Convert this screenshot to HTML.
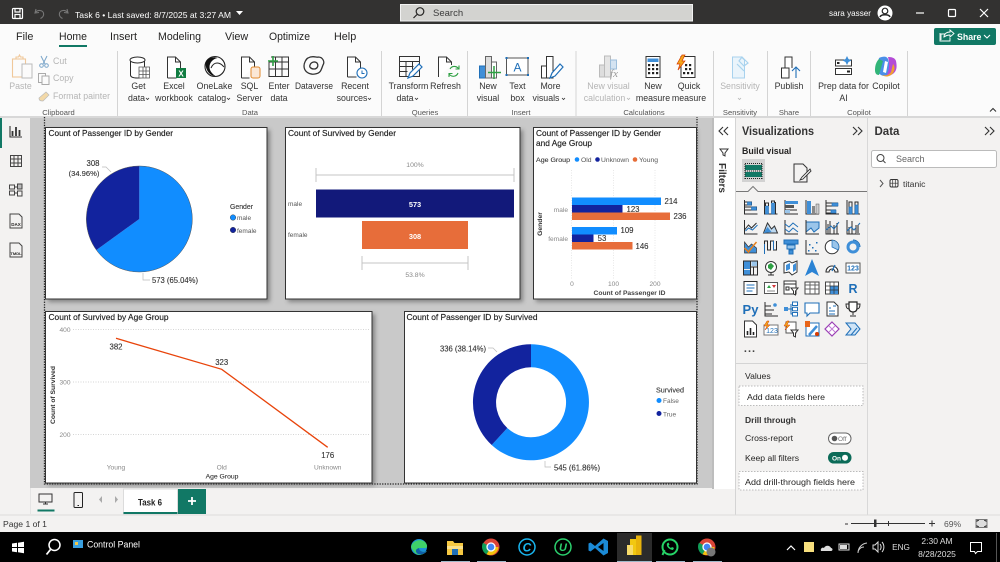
<!DOCTYPE html>
<html><head><meta charset="utf-8"><title>Task 6</title>
<style>
html,body{margin:0;padding:0;background:#fff;width:1000px;height:562px;overflow:hidden}
svg{display:block}
text{font-family:"Liberation Sans",sans-serif;fill:#252423;font-size:9px}
.r{text-anchor:middle;font-size:8.8px;fill:#333}
.g{text-anchor:middle;font-size:8.8px;fill:#b5b5b5}
.c{text-anchor:middle;font-size:7.6px;fill:#555}
.tb{font-size:10.8px;fill:#252423}
.t{font-size:8.6px;fill:#1c1c1c;stroke:#1c1c1c;stroke-width:.15px}
.d{font-size:7.8px;fill:#333;text-anchor:middle;stroke:#333;stroke-width:.12px}
.ax{font-size:6.6px;fill:#888;text-anchor:middle}
.w{fill:#fff}
.k{fill:none;stroke:#2b2b2b;stroke-width:1}
.b{fill:#3f8fd8;stroke:#1f6fb8;stroke-width:.6}
.bl{fill:none;stroke:#1f6fb8;stroke-width:1}
.v{font-size:8.6px;fill:#252423}
</style></head><body>
<svg width="1000" height="562" viewBox="0 0 1000 562" xmlns="http://www.w3.org/2000/svg">
<defs><filter id="s" x="-10%" y="-10%" width="125%" height="125%"><feGaussianBlur stdDeviation="2.2"/></filter></defs>

<!-- base -->
<rect width="1000" height="562" fill="#f3f2f1"/>
<rect x="0" y="0" width="1000" height="24" fill="#333231"/>
<rect x="0" y="24" width="1000" height="93" fill="#fbfbfb"/>
<rect x="0" y="116" width="1000" height="2" fill="#d8d8d8"/>
<rect x="30" y="118" width="682" height="370" fill="#c9c9c9"/>
<rect x="712" y="118" width="24" height="371" fill="#fff"/>
<rect x="712" y="118" width="2" height="371" fill="#bdbdbd"/>
<rect x="735" y="118" width="1" height="397" fill="#d4d4d4"/>
<rect x="867" y="118" width="1" height="397" fill="#d8d8d8"/>
<rect x="0" y="514.500" width="1000" height="1" fill="#dcdcdc"/>
<rect x="0" y="532" width="1000" height="30" fill="#000"/>

<!-- title bar -->
<g fill="none" stroke="#fff" stroke-width="1.200"><rect x="12.500" y="8.500" width="10" height="10" rx="1"/><path d="M15 8.500v3.500h5V8.500M15 18.500v-4h5v4"/></g>
<g fill="none" stroke="#777" stroke-width="1.100"><path d="M36 9l-1 4 4-.5M35.500 12.500c2-3 7-2.500 8 .5 .7 2.500-1 4.500-3 5.500"/><path d="M67 9l1 4-4-.5M67.500 12.500c-2-3-7-2.500-8 .5-.7 2.500 1 4.500 3 5.500"/></g>
<text x="75" y="18" style="fill:#fff;font-size:8.600px" textLength="156" lengthAdjust="spacingAndGlyphs">Task 6 • Last saved: 8/7/2025 at 3:27 AM</text>
<path d="M236 11h7l-3.500 4z" fill="#fff"/>
<rect x="400.500" y="4.500" width="292" height="16.500" fill="#d3d3d0" stroke="#f2f2f2"/>
<g fill="none" stroke="#252423" stroke-width="1.200"><circle cx="420" cy="11.500" r="3.800"/><path d="M417 14.500l-3.500 3.500"/></g>
<text x="433" y="16" style="font-size:9.500px;fill:#3b3b3b">Search</text>
<text x="829" y="16" style="font-size:8.500px;fill:#fff" textLength="42" lengthAdjust="spacingAndGlyphs">sara yasser</text>
<circle cx="885" cy="13" r="7.500" fill="#fff"/><circle cx="885" cy="11" r="2.800" fill="none" stroke="#222" stroke-width="1.200"/><path d="M880 17c1-3 9-3 10 0" fill="none" stroke="#222" stroke-width="1.500"/>
<path d="M916 13h8" stroke="#fff" stroke-width="1.200"/><rect x="948.500" y="9.500" width="7" height="7" rx="1" fill="none" stroke="#fff" stroke-width="1.200"/><path d="M980 9l8 8M988 9l-8 8" stroke="#fff" stroke-width="1.200"/>

<!-- tabs -->
<text x="16" y="40" class="tb">File</text>
<text x="59" y="40" class="tb" textLength="28" lengthAdjust="spacingAndGlyphs">Home</text>
<rect x="59" y="45" width="28" height="2" fill="#117865"/>
<text x="110" y="40" class="tb">Insert</text>
<text x="158" y="40" class="tb" textLength="43" lengthAdjust="spacingAndGlyphs">Modeling</text>
<text x="225" y="40" class="tb">View</text>
<text x="269" y="40" class="tb" textLength="41" lengthAdjust="spacingAndGlyphs">Optimize</text>
<text x="334" y="40" class="tb">Help</text>
<rect x="934" y="28" width="62" height="17" rx="2" fill="#117865"/>
<path d="M941 40v-6h4M944 36c1-3 3-4 6-4v-2l4 3.500-4 3.500v-2c-2 0-4 .5-6 2z M940 33v8h10v-3" fill="none" stroke="#fff" stroke-width=".9"/>
<text x="957" y="40" style="font-size:8.800px;fill:#fff;font-weight:bold">Share</text>
<path d="M984 35l3 3 3-3" fill="none" stroke="#fff" stroke-width="1.100"/>

<!-- ribbon separators -->
<g fill="#d4d4d4"><rect x="117" y="51" width="1" height="65"/><rect x="381" y="51" width="1" height="65"/><rect x="467" y="51" width="1" height="65"/><rect x="575.500" y="51" width="1" height="65"/><rect x="713" y="51" width="1" height="65"/><rect x="767" y="51" width="1" height="65"/><rect x="810" y="51" width="1" height="65"/><rect x="907" y="51" width="1" height="65"/></g>

<!-- clipboard -->
<g fill="none" stroke="#f0c89a" stroke-width="1.100"><rect x="12.500" y="59" width="13" height="18"/><path d="M16 59v-2h2.500l1-2 1 2H23v2"/></g><rect x="22" y="64" width="10" height="14" fill="#fbfbfb" stroke="#bbb"/>
<text x="20.500" y="89" class="g">Paste</text>
<path d="M41 56l4 8M47 56l-4 8" stroke="#7aa5c9" fill="none"/><circle cx="41.500" cy="65.500" r="1.800" fill="none" stroke="#7aa5c9"/><circle cx="46.500" cy="65.500" r="1.800" fill="none" stroke="#7aa5c9"/>
<text x="53" y="64" style="fill:#b5b5b5;font-size:8.800px">Cut</text>
<g fill="none" stroke="#aaa"><rect x="38.500" y="73.500" width="7" height="9"/><path d="M42 76h7v8.500h-7z" fill="#fbfbfb"/></g>
<text x="53" y="81" style="fill:#b5b5b5;font-size:8.800px">Copy</text>
<path d="M39 98l7-6 3 3-6 6c-2 0-4 0-4-3z" fill="#f3d9a8" stroke="#bbb" stroke-width=".7"/>
<text x="53" y="99" style="fill:#b5b5b5;font-size:8.800px" textLength="57" lengthAdjust="spacingAndGlyphs">Format painter</text>
<text x="58.500" y="115" class="c">Clipboard</text>

<!-- data -->
<g fill="#fff" stroke="#2b2b2b"><path d="M130.500 60v15c0 2 3 3 7 3s7-1 7-3V60"/><ellipse cx="137.500" cy="60" rx="7.500" ry="3"/><path d="M139 67h10.500v11H139zM139 71h10.500M139 74.500h10.500M143 67v11M146 67v11" stroke="#555" stroke-width=".8"/></g>
<text x="138.500" y="89" class="r">Get</text><text x="136.500" y="101" class="r">data</text><path d="M146 98l1.500 1.500L149 98" fill="none" stroke="#333" stroke-width=".8"/>
<path d="M167.500 78V57h8l5 5v6M175.500 57v5h5M167.500 78h9" fill="#fff" stroke="#333"/><rect x="176" y="68" width="10" height="10" fill="#107c41"/><text x="181" y="76.500" style="font-size:8px;fill:#fff;text-anchor:middle;font-weight:bold">X</text>
<text x="174" y="89" class="r">Excel</text><text x="174" y="101" class="r">workbook</text>
<circle cx="215" cy="66.500" r="10" fill="#fff" stroke="#222" stroke-width="1.100"/><path d="M205.500 63c1-5 8-7 12-5-5 1-8 5-8 9 0 4 3 7 6 9-5 0-10-5-10-13z" fill="#111"/><path d="M211 68c3-7 9-6 13-1" fill="none" stroke="#222"/>
<text x="214.500" y="89" class="r">OneLake</text><text x="212" y="101" class="r">catalog</text><path d="M227 98l1.500 1.500L230 98" fill="none" stroke="#333" stroke-width=".8"/>
<path d="M241.500 78V57h8l5 5v5M249.500 57v5h5M241.500 78h8" fill="#fff" stroke="#333"/><rect x="251" y="67" width="9" height="11" rx="2" fill="#fbe7d5" stroke="#e08a2e"/>
<text x="249.500" y="89" class="r">SQL</text><text x="249.500" y="101" class="r">Server</text>
<path d="M271 57h17.500v19.500H269V62M269 62h19.500M269 69h19.500M275.500 57v19.500M282 57v19.500" fill="none" stroke="#333"/><path d="M273 56v10M268 61h10" stroke="#2ea043" stroke-width="1.600"/>
<text x="279" y="89" class="r">Enter</text><text x="279" y="101" class="r">data</text>
<g fill="none" stroke="#333" stroke-width="1.300"><path d="M308 58c5-3 9 0 10-1 5 0 7 5 5 8-2 5-2 8-8 9-5 1-11-2-11-8 0-3 2-7 4-8z"/><path d="M310 65c1-3 5-4 7-2 2 3 0 6-3 6s-5-2-4-4z"/></g>
<text x="314" y="89" class="r" textLength="38" lengthAdjust="spacingAndGlyphs">Dataverse</text>
<path d="M347.500 77V57h8l5 5v6M355.500 57v5h5M347.500 77h9" fill="#fff" stroke="#333"/><circle cx="362" cy="73" r="5" fill="#fff" stroke="#1f6fb8" stroke-width="1.100"/><path d="M362 70.500V73.500h2.500" fill="none" stroke="#1f6fb8"/>
<text x="355" y="89" class="r">Recent</text><text x="352" y="101" class="r">sources</text><path d="M368 98l1.500 1.500L371 98" fill="none" stroke="#333" stroke-width=".8"/>
<text x="250" y="115" class="c">Data</text>

<!-- queries -->
<path d="M399.500 56.500h20v20h-20zM399.500 61.500h20M406 61.500v15M412.500 61.500v8M399.500 66.500h14M399.500 71.500h8" fill="none" stroke="#333"/><path d="M408 78l2-5 9-9 3 3-9 9z" fill="#fff" stroke="#1f6fb8" stroke-width="1.200"/>
<text x="408.500" y="89" class="r">Transform</text><text x="405" y="101" class="r">data</text><path d="M415 98l1.500 1.500L418 98" fill="none" stroke="#333" stroke-width=".8"/>
<path d="M438.500 77V57h8l5 5v3M446.500 57v5h5" fill="#fff" stroke="#333"/><path d="M450 69a5 5 0 0 1 8-1l1 1M458 73a5 5 0 0 1-8 2l-1-1M459 65.500v3.500h-3.500M449 77v-3.500h3.500" fill="none" stroke="#2ea043" stroke-width="1.100"/>
<text x="445.500" y="89" class="r">Refresh</text>
<text x="425" y="115" class="c">Queries</text>

<!-- insert -->
<rect x="479.500" y="66" width="6" height="12" fill="#3f8fd8" stroke="#1f6fb8"/><rect x="485.500" y="56.500" width="6" height="21.500" fill="#ddd" stroke="#666"/><rect x="491.500" y="62" width="5" height="16" fill="#fff" stroke="#666"/><path d="M494 66v13M488 72.500h13" stroke="#2ea043" stroke-width="1.500"/>
<text x="488" y="89" class="r">New</text><text x="488" y="101" class="r">visual</text>
<rect x="506.500" y="58" width="21.500" height="17" fill="#fff" stroke="#555"/><g fill="#1f6fb8"><rect x="505.500" y="57" width="2" height="2"/><rect x="527" y="57" width="2" height="2"/><rect x="505.500" y="74" width="2" height="2"/><rect x="527" y="74" width="2" height="2"/></g><text x="517.500" y="71.500" style="font-size:12px;fill:#1f6fb8;text-anchor:middle">A</text>
<text x="517.500" y="89" class="r">Text</text><text x="517.500" y="101" class="r">box</text>
<path d="M541.500 78V66h5v12zM546.500 78V56.500h6.500V78zM553 78h-11.500" fill="#fff" stroke="#333"/><path d="M550 78l2-5 8-9 3 3-8 9z" fill="#fff" stroke="#1f6fb8" stroke-width="1.200"/>
<text x="550.500" y="89" class="r">More</text><text x="546" y="101" class="r">visuals</text><path d="M562 98l1.500 1.500L565 98" fill="none" stroke="#333" stroke-width=".8"/>
<text x="521" y="115" class="c">Insert</text>

<!-- calculations -->
<rect x="599.500" y="65" width="5" height="12" fill="#ddd" stroke="#bbb"/><rect x="604.500" y="56" width="6" height="21" fill="#e5e5e5" stroke="#bbb"/><rect x="610.500" y="60" width="6" height="9" fill="#d4e3f1" stroke="#9dbedb"/><text x="614" y="77" style="font-family:'Liberation Serif',serif;font-style:italic;font-size:11px;fill:#999;text-anchor:middle">fx</text>
<text x="608.500" y="89" class="g">New visual</text><text x="604.500" y="101" class="g">calculation</text><path d="M627 98l1.500 1.500L630 98" fill="none" stroke="#b5b5b5" stroke-width=".8"/>
<rect x="646" y="56.500" width="14" height="21" fill="#fff" stroke="#333"/><rect x="647.500" y="58.500" width="11" height="3.500" fill="#3f8fd8"/><g fill="#222"><rect x="648" y="64" width="2.200" height="2.200"/><rect x="652" y="64" width="2.200" height="2.200"/><rect x="656" y="64" width="2.200" height="2.200"/><rect x="648" y="68" width="2.200" height="2.200"/><rect x="652" y="68" width="2.200" height="2.200"/><rect x="656" y="68" width="2.200" height="2.200"/><rect x="648" y="72" width="2.200" height="2.200"/><rect x="652" y="72" width="2.200" height="2.200"/><rect x="656" y="72" width="2.200" height="2.200"/></g>
<text x="653" y="89" class="r">New</text><text x="653" y="101" class="r">measure</text>
<rect x="681" y="56.500" width="14" height="21" fill="#fff" stroke="#333"/><g fill="#222"><rect x="685" y="64" width="2.200" height="2.200"/><rect x="689" y="64" width="2.200" height="2.200"/><rect x="685" y="68" width="2.200" height="2.200"/><rect x="689" y="68" width="2.200" height="2.200"/><rect x="683" y="72" width="2.200" height="2.200"/><rect x="687" y="72" width="2.200" height="2.200"/><rect x="691" y="72" width="2.200" height="2.200"/></g><path d="M682 55l-5 9h3l-2 6 7-9h-3l3-6z" fill="#f2a81d" stroke="#d83b01" stroke-width=".7"/>
<text x="689" y="89" class="r">Quick</text><text x="689" y="101" class="r">measure</text>
<text x="644" y="115" class="c">Calculations</text>

<!-- sensitivity -->
<path d="M732.500 57h9l3 3v18h-12z" fill="#eaf4fb" stroke="#a8d2ee"/><path d="M737 64l7 7M742 57l6 6-4 3-5-5z" fill="none" stroke="#a8d2ee" stroke-width="1.200"/>
<text x="740" y="89" class="g">Sensitivity</text><path d="M738 98l1.500 1.500L741 98" fill="none" stroke="#b5b5b5" stroke-width=".8"/>
<text x="740" y="115" class="c">Sensitivity</text>
<!-- publish -->
<path d="M781.500 78V68h7.500v10zM785 68v-11h7v11M781.500 78h7.500" fill="#fff" stroke="#333"/><path d="M796 78V67M792 71l4-4 4 4" fill="none" stroke="#1f6fb8" stroke-width="1.100"/>
<text x="789" y="89" class="r">Publish</text><text x="789" y="115" class="c">Share</text>
<!-- copilot -->
<rect x="835.500" y="60" width="16" height="6" fill="#fff" stroke="#333"/><rect x="835.500" y="68.500" width="16" height="6" fill="#fff" stroke="#333"/><rect x="837" y="62" width="2.500" height="2" fill="#222"/><rect x="847" y="70.500" width="3" height="2" fill="#222"/>
<path d="M847 56l1.500 3 3 1.500-3 1.500-1.500 3-1.500-3-3-1.500 3-1.500z" fill="#3f8fd8"/>
<text x="843.500" y="89" class="r">Prep data for</text><text x="843.500" y="101" class="r">AI</text>
<path d="M879 58c4-2 8-2 9 1l3 12c-2 5-7 6-10 4l-3-2c0-4 0-11 1-15z" fill="#4b8fe8"/><path d="M888 57c4 0 7 1 8 4 1 5 1 9-2 12-2 2-5 3-8 3 3-4 4-12 2-19z" fill="#b44bd6"/><path d="M875 70c0-4 1-8 4-11l4 2-4 14c-3 0-4-2-4-5z" fill="#32b578"/><path d="M882 75c4 1 7 0 9-3l2-8c2 2 2 6 0 9-2 3-7 5-11 2z" fill="#f0a030"/><path d="M885 61l3 1-2 11-3-1z" fill="#fff"/>
<text x="886" y="89" class="r">Copilot</text><text x="859" y="115" class="c">Copilot</text>
<path d="M990 111.500l3-3 3 3" fill="none" stroke="#333" stroke-width="1.100"/>

<!-- left nav -->
<rect x="0" y="118" width="2" height="30" fill="#117865"/>
<g fill="none" stroke="#333" stroke-width="1.100"><path d="M10 126v11h12" /><path d="M12.500 136v-5M16 136v-9M19.500 136v-6" stroke-width="1.800"/></g>
<g fill="none" stroke="#444"><rect x="10.500" y="155.500" width="11" height="11"/><path d="M10.500 159h11M10.500 163h11M14 155.500v11M18 155.500v11"/></g>
<g fill="none" stroke="#444"><rect x="9.500" y="185" width="5" height="4"/><rect x="9.500" y="191" width="5" height="4"/><path d="M14.500 187h3M14.500 193h3"/><rect x="17.500" y="184" width="4.500" height="5" fill="#bbb"/><rect x="17.500" y="191" width="4.500" height="5"/></g>
<path d="M10 214h9l3 3v11H10z" fill="none" stroke="#444"/><text x="16" y="226" style="font-size:4.500px;text-anchor:middle;font-weight:bold">DAX</text>
<path d="M10 243h9l3 3v11H10z" fill="none" stroke="#444"/><text x="16" y="255" style="font-size:4px;text-anchor:middle;font-weight:bold">TMDL</text>

<!-- canvas frame -->
<path d="M44.500 117V484H697V117" fill="none" stroke="#222" stroke-width="1.300" stroke-dasharray="1.300 1.300"/>

<!-- shadows -->
<g fill="#555" opacity=".6" filter="url(#s)"><rect x="48" y="130" width="222" height="172"/><rect x="288" y="130" width="235" height="172"/><rect x="536" y="130" width="161" height="172"/><rect x="48" y="314" width="327" height="171"/></g>

<!-- visual 1 -->
<rect x="45.500" y="127.500" width="221.500" height="171.500" fill="#fff" stroke="#333"/>
<text x="48.500" y="136" class="t" textLength="124.500" lengthAdjust="spacingAndGlyphs">Count of Passenger ID by Gender</text>
<path d="M139.300 166A53 53 0 1 1 96.400 250L139.300 219Z" fill="#118dff"/>
<path d="M139.300 166A53 53 0 0 0 96.400 250L139.300 219Z" fill="#12239e"/>
<circle cx="139.300" cy="219" r="53" fill="none" stroke="#555" stroke-width=".5"/>
<text x="93" y="166" class="d">308</text><text x="84" y="176" class="d" style="font-size:7.600px">(34.96%)</text>
<text x="152" y="283" style="font-size:7.800px;fill:#333;stroke:#333;stroke-width:.12px" textLength="46" lengthAdjust="spacingAndGlyphs">573 (65.04%)</text>
<path d="M102 167h4l5 5M143 273v7h7" fill="none" stroke="#bbb" stroke-width=".7"/>
<text x="230" y="209" style="font-size:7px;fill:#333;stroke:#333;stroke-width:.12px" textLength="23" lengthAdjust="spacingAndGlyphs">Gender</text>
<circle cx="233" cy="217.500" r="2.800" fill="#118dff" stroke="#333" stroke-width=".4"/><text x="237" y="220" style="font-size:6.500px;fill:#555">male</text>
<circle cx="233" cy="230" r="2.800" fill="#12239e" stroke="#333" stroke-width=".4"/><text x="237" y="233" style="font-size:6.500px;fill:#555">female</text>

<!-- visual 2 -->
<rect x="285.500" y="127.500" width="234.500" height="171.500" fill="#fff" stroke="#333"/>
<text x="288" y="136" class="t" textLength="108" lengthAdjust="spacingAndGlyphs">Count of Survived by Gender</text>
<text x="415" y="167" class="ax" style="font-size:6.800px">100%</text>
<path d="M316 175h198M316 168v14M514 168v14M362 263h106M362 256v14M468 256v14" fill="none" stroke="#c4c4c4"/>
<rect x="316" y="189.500" width="198" height="28" fill="#12197a"/>
<rect x="362" y="221" width="106" height="28" fill="#e76d3a"/>
<text x="415" y="207" class="d" style="fill:#fff;font-weight:bold;font-size:7.400px;stroke:none">573</text>
<text x="415" y="239" class="d" style="fill:#fff;font-weight:bold;font-size:7.400px;stroke:none">308</text>
<text x="288" y="206" style="font-size:6.500px;fill:#555">male</text>
<text x="288" y="237" style="font-size:6.500px;fill:#555">female</text>
<text x="415" y="277" class="ax" style="font-size:6.800px">53.8%</text>

<!-- visual 3 -->
<rect x="533.500" y="127.500" width="163" height="171.500" fill="#fff" stroke="#333"/>
<text x="536" y="136" class="t" textLength="125" lengthAdjust="spacingAndGlyphs">Count of Passenger ID by Gender</text>
<text x="536" y="146" class="t" textLength="56" lengthAdjust="spacingAndGlyphs">and Age Group</text>
<text x="536" y="162" style="font-size:6.800px;fill:#333;stroke:#333;stroke-width:.1px" textLength="34" lengthAdjust="spacingAndGlyphs">Age Group</text>
<circle cx="577" cy="159.500" r="2.300" fill="#118dff"/><text x="581" y="162" style="font-size:6.800px;fill:#555">Old</text>
<circle cx="597.500" cy="159.500" r="2.300" fill="#12239e"/><text x="601" y="162" style="font-size:6.800px;fill:#555" textLength="28" lengthAdjust="spacingAndGlyphs">Unknown</text>
<circle cx="635" cy="159.500" r="2.300" fill="#e66c37"/><text x="639" y="162" style="font-size:6.800px;fill:#555">Young</text>
<path d="M571.500 170V280M613.500 170V280M655 170V280" stroke="#ddd" stroke-width=".7" stroke-dasharray="1 1.500"/>
<rect x="572" y="197.500" width="89" height="7.500" fill="#118dff"/><rect x="572" y="205" width="50.500" height="7.500" fill="#12239e"/><rect x="572" y="212.500" width="98" height="7.500" fill="#e76d3a"/>
<rect x="572" y="227" width="45" height="7.500" fill="#118dff"/><rect x="572" y="234.500" width="21.500" height="7.500" fill="#12239e"/><rect x="572" y="242" width="60.500" height="7.500" fill="#e76d3a"/>
<text x="671" y="204" class="d">214</text><text x="633" y="212" class="d">123</text><text x="680" y="219" class="d">236</text><text x="627" y="233" class="d">109</text><text x="602" y="241" class="d">53</text><text x="642" y="249" class="d">146</text>
<text x="568" y="212" class="ax" style="text-anchor:end">male</text><text x="568" y="241" class="ax" style="text-anchor:end">female</text>
<text x="542" y="224" transform="rotate(-90 542 224)" style="font-size:6.800px;font-weight:bold;fill:#333;text-anchor:middle">Gender</text>
<text x="572" y="286" class="ax">0</text><text x="613.500" y="286" class="ax">100</text><text x="655" y="286" class="ax">200</text>
<text x="629.500" y="295" style="font-size:6.800px;font-weight:bold;fill:#444;text-anchor:middle" textLength="72" lengthAdjust="spacingAndGlyphs">Count of Passenger ID</text>

<!-- visual 4 -->
<rect x="45.500" y="311.500" width="326.500" height="171.500" fill="#fff" stroke="#333"/>
<text x="48.500" y="320" class="t" textLength="120" lengthAdjust="spacingAndGlyphs">Count of Survived by Age Group</text>
<path d="M73 329.500H370M73 382H370M73 434.500H370" stroke="#d5d5d5" stroke-dasharray="1 1.500"/>
<text x="65" y="332" class="ax">400</text><text x="65" y="384.500" class="ax">300</text><text x="65" y="437" class="ax">200</text>
<path d="M116 338.300L221.700 369.300L327.700 447.300" fill="none" stroke="#e8440b" stroke-width="1.300"/>
<text x="116" y="349.500" class="d">382</text><text x="221.700" y="365" class="d">323</text><text x="327.700" y="458" class="d">176</text>
<text x="116" y="469.500" class="ax">Young</text><text x="221.700" y="469.500" class="ax">Old</text><text x="327.700" y="469.500" class="ax">Unknown</text>
<text x="222" y="478.500" style="font-size:6.800px;fill:#333;stroke:#333;stroke-width:.1px;text-anchor:middle">Age Group</text>
<text x="55" y="395" transform="rotate(-90 55 395)" style="font-size:6.800px;fill:#333;text-anchor:middle;font-weight:bold" textLength="58" lengthAdjust="spacingAndGlyphs">Count of Survived</text>

<!-- visual 5 -->
<rect x="404.500" y="311.500" width="292" height="171.500" fill="#fff" stroke="#333"/>
<text x="406.500" y="320" class="t" textLength="131" lengthAdjust="spacingAndGlyphs">Count of Passenger ID by Survived</text>
<path d="M531 344.300A58 58 0 1 1 491.700 445L507.300 428A35 35 0 1 0 531 367.300Z" fill="#118dff"/>
<path d="M531 344.300A58 58 0 0 0 491.700 445L507.300 428A35 35 0 0 1 531 367.300Z" fill="#12239e"/>
<text x="440" y="351.500" style="font-size:7.800px;fill:#333;stroke:#333;stroke-width:.12px" textLength="46" lengthAdjust="spacingAndGlyphs">336 (38.14%)</text>
<text x="554" y="470.500" style="font-size:7.800px;fill:#333;stroke:#333;stroke-width:.12px" textLength="46" lengthAdjust="spacingAndGlyphs">545 (61.86%)</text>
<path d="M488 348h5l4 4M545 461v6h6" fill="none" stroke="#bbb" stroke-width=".7"/>
<text x="656" y="392.500" style="font-size:7px;fill:#333;stroke:#333;stroke-width:.12px" textLength="28" lengthAdjust="spacingAndGlyphs">Survived</text>
<circle cx="659" cy="400.500" r="2.500" fill="#118dff"/><text x="663" y="403" style="font-size:6.500px;fill:#666">False</text>
<circle cx="659" cy="413.500" r="2.500" fill="#12239e"/><text x="663" y="416.500" style="font-size:6.500px;fill:#666">True</text>

<!-- filters pane -->
<path d="M723 127l-4 4 4 4M728 127l-4 4 4 4" fill="none" stroke="#333" stroke-width="1.100"/>
<path d="M720 149h8l-3 4v3l-2-1v-2z" fill="none" stroke="#333"/>
<text x="719" y="163" transform="rotate(90 719 163)" style="font-size:10px;font-weight:bold;fill:#333" textLength="30" lengthAdjust="spacingAndGlyphs">Filters</text>

<!-- viz pane -->
<text x="742" y="135" style="font-size:11.500px;font-weight:bold;fill:#333" textLength="72" lengthAdjust="spacingAndGlyphs">Visualizations</text>
<path d="M853 127l4 4-4 4M858 127l4 4-4 4" fill="none" stroke="#333" stroke-width="1.100"/>
<text x="742" y="154" style="font-size:8.800px;font-weight:bold;fill:#252423">Build visual</text>
<rect x="742" y="159" width="23" height="23" fill="#d2d2d2"/>
<rect x="745" y="165" width="17" height="5" fill="#117865"/><rect x="745" y="172" width="17" height="5" fill="#117865"/><path d="M745 163.500h17M745 171h17M745 178.500h17M745 164v15M762 164v15" stroke="#222" stroke-dasharray="1 1" fill="none"/>
<path d="M794 164h9l4 4v14h-13z" fill="none" stroke="#333"/><path d="M800 180l2-3 8-8 1 2-8 8z" fill="#fff" stroke="#333" stroke-width=".9"/>
<path d="M736 191.500H748l5-5 5 5H867" fill="#f3f2f1" stroke="#777"/>

<!-- viz icons -->
<g transform="translate(750.500 207)"><path class="k" d="M-6-7V7H7"/><path class="k" d="M-6-5H1V-2H-6M-6 0H6V3H-6"/><rect class="b" x="-3" y="-5" width="4" height="3"/><rect class="b" x="1" y="0" width="5" height="3"/></g>
<g transform="translate(770.500 207)"><path class="k" d="M-6-7V7H7"/><rect class="b" x="-5" y="-1" width="3" height="8"/><rect class="b" x="1" y="-4" width="3" height="11"/><path class="k" d="M-5-1V-4H-2V-1M1-4V-6H4V-4M5 7V-5"/></g>
<g transform="translate(791 207)"><path class="k" d="M-6-7V7H7"/><rect x="-6" y="-6" width="13" height="3" fill="#3f8fd8"/><rect x="-6" y="-2" width="9" height="3" fill="#555"/><path class="k" d="M-6 3H6"/><rect x="-6" y="3" width="5" height="3" fill="#9ac5ea"/></g>
<g transform="translate(812 207)"><path class="k" d="M-6-7V7H7"/><rect x="-5" y="-6" width="4" height="13" fill="#3f8fd8"/><rect x="0" y="-1" width="3" height="8" fill="#888"/><rect x="4" y="-3" width="3" height="10" fill="#ccc" stroke="#555" stroke-width=".5"/></g>
<g transform="translate(832 207)"><path class="k" d="M-6-7V7H7M-6-4H6M-6-1H6M-6 3H4M-6 6H4"/><rect class="b" x="0" y="-4" width="6" height="3"/><rect class="b" x="-1" y="3" width="5" height="3"/></g>
<g transform="translate(853 207)"><path class="k" d="M-6-7V7H7M-4 7V-5H-1V7M2 7V-5H5V7"/><rect class="b" x="-4" y="0" width="3" height="7"/><rect class="b" x="2" y="-2" width="3" height="9"/></g>

<g transform="translate(750.500 227)"><path class="k" d="M-6-7V7H7"/><path class="k" d="M-6 3L-2-2 1 1 6-4" /><path class="bl" d="M-5 4L-2 1 2 3 7-2"/></g>
<g transform="translate(770.500 227)"><path d="M-7 6L-3-4 1 2 4-1 7 6Z" fill="#bcd8f0" stroke="#333"/><path d="M-7 6L-3 0 1 5Z" fill="#3f8fd8"/></g>
<g transform="translate(791 227)"><path class="k" d="M-6-7V7H7"/><path class="bl" d="M-6-3L-2 0 2-4 7 0M-6 2L-2 5 2 1 7 5" stroke-width="1.300"/></g>
<g transform="translate(812 227)"><path d="M-6-5H7V1L2 5-1 1-6 5Z" fill="#9ac5ea" stroke="#1f6fb8"/><path class="k" d="M-6-7V7H7"/></g>
<g transform="translate(832 227)"><path class="k" d="M-6-7V7H7M-4 7V-3M-2 7V-6M2 7V-2M5 7V-4"/><path class="bl" d="M-6 3L-1-1 2 2 7-5" stroke-width="1.300"/></g>
<g transform="translate(853 227)"><path class="k" d="M-6-7V7H7M-4 7V0M-1 7V-6M3 7V-2"/><path class="bl" d="M-6 4L-2 0 1 3 7-4" stroke-width="1.300"/><rect x="3" y="-2" width="3" height="9" fill="#888"/></g>

<g transform="translate(750.500 247)"><path d="M-6-5L-2 0 1-3 6 1 6 6-6 6Z" fill="#3f8fd8" stroke="#333" stroke-width=".7"/><path d="M-6 1L-2 5 1 1 6-5" stroke="#e8801b" stroke-width="1.500" fill="none"/></g>
<g transform="translate(770.500 247)"><path class="k" d="M-6 7V-6H-3V3H0V-6H3V3H6V-6"/><path class="bl" d="M-6 7V-3M3-6V3" stroke-width="1.500"/></g>
<g transform="translate(791 247)"><path d="M-7-7H7V-3H-7Z" fill="#3f8fd8" stroke="#1f6fb8"/><path d="M-4-2H4V2H-4Z" fill="#9ac5ea" stroke="#1f6fb8"/><path d="M-2 3H2V7H-2Z" fill="#3f8fd8" stroke="#1f6fb8"/></g>
<g transform="translate(812 247)"><path class="k" d="M-6-7V7H7"/><g fill="#1f6fb8"><rect x="-4" y="3" width="1.500" height="1.500"/><rect x="-3" y="-3" width="1.500" height="1.500"/><rect x="0" y="0" width="1.500" height="1.500"/><rect x="3" y="3" width="1.500" height="1.500"/><rect x="4" y="-5" width="1.500" height="1.500"/></g></g>
<g transform="translate(832 247)"><circle r="6.800" fill="#fff" stroke="#2b2b2b"/><path d="M0 0V-6.800A6.800 6.800 0 0 1 6.200 3Z" fill="#9ac5ea" stroke="#1f6fb8" stroke-width=".7"/></g>
<g transform="translate(853 247)"><circle r="5" fill="none" stroke="#3f8fd8" stroke-width="3"/><path d="M0-7A7 7 0 0 1 7 0" fill="none" stroke="#1f6fb8"/></g>

<g transform="translate(750.500 268)"><rect x="-7" y="-7" width="7" height="8" fill="#3f8fd8"/><rect x="-7" y="2" width="7" height="5" fill="#3f8fd8"/><rect x="1" y="-7" width="6" height="5" fill="#9ac5ea"/><path class="k" d="M-7-7H7V7H-7ZM0-7V7M0-1H7M3-1V7"/></g>
<g transform="translate(771 268)"><circle cy="-1" r="5.500" fill="#fff" stroke="#333"/><path d="M-3-3L0-5 3-2 0 2-3 0Z" fill="#2ea043"/><path class="k" d="M-3 7H3M0 5V7"/></g>
<g transform="translate(791 268)"><path d="M-7-5L-2-7 1-5 6-7V4L1 7-2 4-7 5Z" fill="#fff" stroke="#333"/><path d="M-5-3L-1-5V1L-5 3ZM2-3L5-5V2L2 4Z" fill="#3f8fd8"/></g>
<g transform="translate(812 268)"><path d="M0-9L7 8 0 4-7 8Z" fill="#2b83d4"/></g>
<g transform="translate(832 268)"><path d="M-6 4A6 6 0 0 1 6 4H3A3 3 0 0 0-3 4Z" fill="#fff" stroke="#2b2b2b" stroke-width="1.100"/><path d="M0 3L3-3" stroke="#1f6fb8" stroke-width="1.300"/></g>
<g transform="translate(853 268)"><rect x="-7" y="-5" width="14" height="10" fill="#fff" stroke="#555"/><text y="2.500" style="font-size:7px;text-anchor:middle;fill:#1f6fb8;font-weight:bold">123</text></g>

<g transform="translate(750.500 288)"><rect x="-6.500" y="-6.500" width="13" height="13" fill="#fff" stroke="#2b2b2b"/><path class="bl" d="M-4-3H4M-4 0H4M-4 3H2"/></g>
<g transform="translate(771 288)"><rect x="-6.500" y="-5.500" width="13" height="11" fill="#fff" stroke="#555"/><path d="M-4 0L-2-3 0 0Z" fill="#2ea043"/><path d="M1-3H5L3 0Z" fill="#d13438"/><path d="M-4 3H4" stroke="#888"/></g>
<g transform="translate(791 288)"><rect x="-7" y="-7" width="12" height="13" fill="#fff" stroke="#333"/><path class="k" d="M-7-4H5M-5-1H-2V2H-5Z"/><path d="M0 0H7L4.500 3V7L2.500 6V3Z" fill="#fff" stroke="#333"/></g>
<g transform="translate(812 288)"><rect x="-7" y="-6" width="14" height="12" fill="#fff" stroke="#444"/><path d="M-7-3H7M-7 1H7M-2-6V6M3-6V6" stroke="#666" fill="none"/></g>
<g transform="translate(832 288)"><rect x="-6.500" y="-6" width="13" height="12" fill="#fff" stroke="#444"/><rect x="-2" y="-2" width="8" height="8" fill="#3f8fd8"/><path d="M-6.500-2H6.500M-6.500 2H6.500M-2-6V6M2-6V6" stroke="#333" fill="none" stroke-width=".7"/></g>
<text x="853" y="293" style="font-size:12.500px;font-weight:bold;fill:#1f6fb8;text-anchor:middle">R</text>

<text x="750.500" y="314" style="font-size:13px;font-weight:bold;fill:#1f6fb8;text-anchor:middle">Py</text>
<g transform="translate(771 309)"><path class="k" d="M-6-7V7H7M-6-3H0M-6 1H3M-6 5H1"/><circle cx="4" cy="-4" r="1.800" fill="#3f8fd8"/></g>
<g transform="translate(791 309)"><rect x="-7" y="-2" width="4" height="4" fill="#3f8fd8"/><g fill="#fff" stroke="#1f6fb8"><rect x="1.500" y="-7" width="5" height="3.500"/><rect x="1.500" y="-1.700" width="5" height="3.500"/><rect x="1.500" y="3.500" width="5" height="3.500"/></g><path class="bl" d="M-3 0H1.500M0-5V5H1.500"/></g>
<g transform="translate(812 309)"><path d="M-7-6H7V4H-2L-5 7V4H-7Z" fill="#fff" stroke="#1f6fb8" stroke-width="1.100"/></g>
<g transform="translate(832 309)"><path d="M-5-7H2L6-3V7H-5Z" fill="#fff" stroke="#333"/><path class="bl" d="M-3-1H-1M-3 2H3M-3 5H3M1-3H4"/></g>
<g transform="translate(853 309)"><path d="M-4-7H4V-1C4 2 2 3 0 3S-4 2-4-1Z" fill="#fff" stroke="#222" stroke-width="1.200"/><path class="k" d="M-4-5H-7C-7-2-6 0-4 0M4-5H7C7-2 6 0 4 0M0 3V6M-3 7H3" stroke-width="1.200"/></g>

<g transform="translate(750.500 329)"><path d="M-6-8H2L6-4V8H-6Z" fill="#fff" stroke="#333"/><path d="M-3 6V2M0 6V-1M3 6V3" stroke="#222" stroke-width="1.600"/></g>
<g transform="translate(771 329)"><rect x="-7" y="-4" width="14" height="10" fill="#fff" stroke="#777"/><text x="1" y="4" style="font-size:7px;text-anchor:middle;fill:#1f6fb8">123</text><path d="M-4-8L-7-3H-4L-6 1-1-4H-4L-2-8Z" fill="#f2a81d" stroke="#d83b01" stroke-width=".5"/></g>
<g transform="translate(791 329)"><rect x="-5" y="-7" width="10" height="11" fill="#fff" stroke="#555"/><path d="M-4-8L-7-3H-4L-6 1-1-4H-4L-2-8Z" fill="#f2a81d" stroke="#d83b01" stroke-width=".5"/><path d="M0 1H7L4.500 4V8L2.500 7V4Z" fill="#fff" stroke="#333"/></g>
<g transform="translate(812 329)"><rect x="-6" y="-6" width="13" height="13" fill="#fff" stroke="#1f6fb8"/><path d="M-3 6L5-3" stroke="#3f8fd8" stroke-width="2.500"/><rect x="-7" y="-8" width="5" height="6" fill="#e8661b"/><circle cx="5" cy="5" r="2" fill="#d83b01"/></g>
<g transform="translate(832 329)"><path d="M0-7L7 0 0 7-7 0Z" fill="#fff" stroke="#9b3fb5" stroke-width="1.200"/><path d="M-3-3L3 3M3-3L-3 3" stroke="#c27ad6"/></g>
<g transform="translate(853 329)"><path d="M-7-6H2L7 0 2 6H-7L-2 0Z" fill="#cfe4f6" stroke="#1f6fb8"/><path d="M-2 6L4-1" stroke="#1f6fb8"/></g>
<text x="750" y="352" style="font-size:11px;font-weight:bold;fill:#444;text-anchor:middle;letter-spacing:1px">...</text>
<rect x="736" y="363" width="131" height="1" fill="#d4d4d4"/>

<text x="745" y="379" class="v">Values</text>
<rect x="739" y="386" width="124" height="19.500" fill="#fff" stroke="#bbb" stroke-dasharray="1.500 1.500"/>
<text x="747" y="400" class="v" textLength="78" lengthAdjust="spacingAndGlyphs">Add data fields here</text>
<text x="745" y="423" class="v" style="font-weight:bold;fill:#333" textLength="51" lengthAdjust="spacingAndGlyphs">Drill through</text>
<text x="745" y="441" class="v" textLength="48" lengthAdjust="spacingAndGlyphs">Cross-report</text>
<rect x="828.500" y="433" width="22.500" height="11" rx="5.500" fill="#fff" stroke="#666"/><circle cx="834.500" cy="438.500" r="2.800" fill="#555"/><text x="838" y="441" style="font-size:6.500px;fill:#777">Off</text>
<text x="745" y="461" class="v" textLength="54" lengthAdjust="spacingAndGlyphs">Keep all filters</text>
<rect x="828" y="452" width="23.500" height="11.500" rx="5.700" fill="#0b6b58"/><circle cx="845" cy="457.700" r="3" fill="#fff"/><text x="832" y="460.500" style="font-size:6.500px;fill:#fff;font-weight:bold">On</text>
<rect x="739" y="471.500" width="124" height="18.500" fill="#fff" stroke="#bbb" stroke-dasharray="1.500 1.500"/>
<text x="745" y="485" class="v" textLength="110" lengthAdjust="spacingAndGlyphs">Add drill-through fields here</text>

<!-- data pane -->
<text x="874.500" y="135" style="font-size:11.500px;font-weight:bold;fill:#333">Data</text>
<path d="M985 127l4 4-4 4M990 127l4 4-4 4" fill="none" stroke="#333" stroke-width="1.100"/>
<rect x="871.500" y="150.500" width="125" height="17" rx="2" fill="#fff" stroke="#bbb"/>
<circle cx="880.500" cy="158" r="3.500" fill="none" stroke="#444"/><path d="M883 160.500l2.500 2.500" stroke="#444"/>
<text x="896" y="162" style="font-size:9px;fill:#666">Search</text>
<path d="M880 180l3 3.500-3 3.500" fill="none" stroke="#555"/>
<rect x="890" y="179.500" width="8" height="7.500" rx="1.500" fill="none" stroke="#333"/><path d="M890 183.200h8M892.700 179.500V187M895.300 179.500V187" stroke="#333" stroke-width=".7"/>
<text x="903" y="187" style="font-size:8.600px;fill:#333">titanic</text>

<!-- page tabs -->
<rect x="30" y="488" width="1" height="26" fill="#e4e4e4"/>
<rect x="39" y="494" width="13" height="8" fill="none" stroke="#333"/><path d="M43 504h5M45.500 502v2" stroke="#333"/><rect x="37.500" y="509.500" width="17" height="2" fill="#117865"/>
<rect x="74" y="492.500" width="8.500" height="15" rx="1" fill="none" stroke="#222"/><rect x="77.500" y="505" width="1.500" height="1" fill="#222"/>
<path d="M102 496v7l-3-3.500z M115 496v7l3-3.500z" fill="#aaa"/>
<rect x="123.500" y="489" width="54" height="25" fill="#fff" stroke="#dcdcdc"/><rect x="123.500" y="512" width="54" height="2" fill="#117865"/>
<text x="150" y="505.500" style="font-size:8.800px;text-anchor:middle;fill:#222;font-weight:bold" textLength="24" lengthAdjust="spacingAndGlyphs">Task 6</text>
<rect x="178" y="489" width="28" height="25" fill="#117865"/><path d="M192 497v8M188 501h8" stroke="#fff" stroke-width="1.800"/>

<!-- status bar -->
<text x="3" y="527" style="font-size:8.600px;fill:#333">Page 1 of 1</text>
<path d="M845 524h3M851 523.500h74M932 520.500v6M929 523.500h6" stroke="#333" fill="none"/><rect x="874" y="519.500" width="2.500" height="7.500" fill="#333"/><path d="M888.500 521v5" stroke="#333"/>
<text x="944" y="527" style="font-size:8.600px;fill:#555">69%</text>
<rect x="976" y="519.500" width="11" height="8" fill="#ddd" stroke="#777"/>
<path d="M977 522v-1.500h2M984 520.500h2v1.500M986 525v1.500h-2M979 526.500h-2V525" fill="none" stroke="#222" stroke-width=".7"/>

<!-- taskbar -->
<path d="M12 543.500l5-.7v4.200h-5zM18 542.700l6-.9v5.200h-6zM12 548h5v4.200l-5-.7zM18 548h6v5.200l-6-.9z" fill="#fff"/>
<circle cx="54.500" cy="545" r="5.500" fill="none" stroke="#fff" stroke-width="1.500"/><path d="M50.500 549.500l-4 5" stroke="#fff" stroke-width="1.800"/>
<rect x="73" y="540" width="10" height="8" fill="#3aa0e0"/><rect x="75" y="542" width="3" height="3" fill="#f2c94c"/>
<text x="87" y="547.500" style="font-size:9px;fill:#fff" textLength="53" lengthAdjust="spacingAndGlyphs">Control Panel</text>

<circle cx="419" cy="547" r="8" fill="#1a8fd8"/><path d="M411 547c1-6 9-9 14-5 2 2 3 5 1 6h-7c0 3 4 5 8 3-3 4-9 5-12 2-2-2-3-4-4-6z" fill="#3fd16a"/><path d="M419 548c0 3 4 5 8 3-2 3-6 4-9 3-3-2-3-5 1-6z" fill="#0f5ea8"/>
<path d="M447 541h6l1.500 2H463v12h-16z" fill="#f5c842"/><rect x="452" y="549" width="6" height="6" fill="#1f6fb8"/><rect x="447" y="546" width="16" height="3" fill="#fbe08a"/>
<circle cx="491" cy="547" r="8.500" fill="#db4437"/><path d="M491 547l7.500 0a8.500 8.500 0 0 1-12 7.300z" fill="#f4c20d"/><path d="M491 547l-4.500 7.300a8.500 8.500 0 0 1-3.500-11.500z" fill="#0f9d58"/><circle cx="491" cy="547" r="4" fill="#4285f4" stroke="#fff" stroke-width="1.300"/>
<circle cx="527" cy="547" r="8" fill="none" stroke="#19b6f0" stroke-width="1.500"/><text x="527" y="551.500" style="font-size:12px;font-style:italic;font-weight:bold;fill:#19b6f0;text-anchor:middle">C</text>
<circle cx="563" cy="547" r="8" fill="none" stroke="#2bd16e" stroke-width="1.500"/><text x="563" y="551" style="font-size:11px;font-style:italic;font-weight:bold;fill:#2bd16e;text-anchor:middle">U</text>
<path fill-rule="evenodd" d="M603.500 538.500L608 541V553L603.500 555.500L595 548L590.500 551.500L588.500 550.500V543.500L590.500 542.500L595 546ZM603.500 543L598 547L603.500 551Z" fill="#1b8ad6"/>
<rect x="617" y="533" width="35" height="29" fill="#2b2b2b"/><rect x="630" y="539" width="6" height="16" fill="#f2c811"/><rect x="636" y="535.500" width="5.500" height="19.500" fill="#e8b30c"/><rect x="627" y="545" width="6" height="10" fill="#f8dc6b"/>
<circle cx="670" cy="547" r="7.500" fill="none" stroke="#25d366" stroke-width="2"/><path d="M662.500 555l2-5" stroke="#25d366" stroke-width="2"/><path d="M667 543.500c-1 3 2 6 6 6.500l1-2-2-1-1 1c-1-.5-2-1.500-2.500-2.500l1-1-1-2z" fill="#25d366"/>
<circle cx="707" cy="547" r="8.500" fill="#db4437"/><path d="M707 547l7.500 0a8.500 8.500 0 0 1-12 7.300z" fill="#f4c20d"/><path d="M707 547l-4.500 7.300a8.500 8.500 0 0 1-3.500-11.500z" fill="#0f9d58"/><circle cx="707" cy="547" r="4" fill="#4285f4" stroke="#fff" stroke-width="1.300"/><circle cx="711" cy="552" r="4.500" fill="#777"/>
<g fill="#9fb9c9"><rect x="441" y="561" width="29" height="1"/><rect x="477" y="561" width="29" height="1"/><rect x="617" y="561" width="35" height="1"/><rect x="656" y="561" width="29" height="1"/><rect x="693" y="561" width="29" height="1"/></g>

<path d="M787 550l4-4 4 4" fill="none" stroke="#fff" stroke-width="1.200"/>
<rect x="804" y="542" width="10" height="10" fill="#f7df7d"/>
<path d="M821 551c-1-3 2-4 3-3 1-3 6-3 7 0 2 0 2 3 0 3z" fill="#ddd"/>
<rect x="839" y="544" width="10" height="6" fill="none" stroke="#ddd"/><rect x="840" y="545" width="7" height="4" fill="#ddd"/>
<path d="M858 553a6 6 0 0 1 6-6M858 553a10 10 0 0 1 9-10" fill="none" stroke="#ccc"/>
<path d="M873 545h2l3-3v10l-3-3h-2zM880 544c1.500 2 1.500 4 0 6M882 542c2.500 3 2.500 7 0 10" fill="none" stroke="#ddd"/>
<text x="901" y="550" style="font-size:8.200px;fill:#ddd;text-anchor:middle">ENG</text>
<text x="937" y="544" style="font-size:8.500px;fill:#ddd;text-anchor:middle">2:30 AM</text>
<text x="937" y="557" style="font-size:8.500px;fill:#ddd;text-anchor:middle">8/28/2025</text>
<path d="M970.500 542.500h11v9h-4l-2 2-1-2h-4z" fill="none" stroke="#fff"/>
<rect x="996" y="533" width="1" height="29" fill="#555"/>
</svg>
</body></html>
